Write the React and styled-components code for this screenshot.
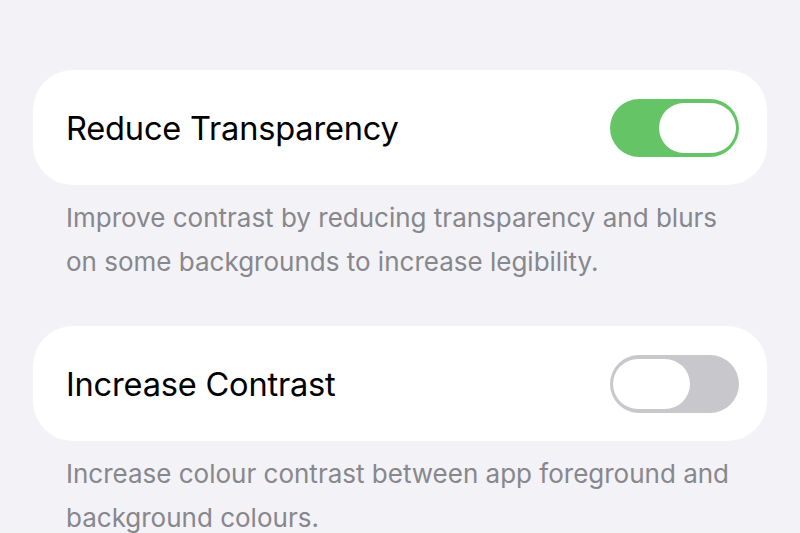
import React from "react";
import styled, { createGlobalStyle } from "styled-components";

const Global = createGlobalStyle`
  html, body { margin: 0; padding: 0; background: #f2f2f7; }
  body { font-family: Inter, "Noto Sans", sans-serif; -webkit-font-smoothing: antialiased; }
`;

const Page = styled.div`
  width: 800px;
  height: 533px;
  overflow: hidden;
  box-sizing: border-box;
  padding: 70px 33px 0 33px;
  display: flex;
  flex-direction: column;
`;

const Section = styled.section`
  display: flex;
  flex-direction: column;
  margin-bottom: 42px;
`;

const Card = styled.div`
  height: 115px;
  background: #ffffff;
  border-radius: 40px;
  display: flex;
  align-items: center;
  justify-content: space-between;
  padding: 0 28px 0 33px;
  box-sizing: border-box;
`;

const Title = styled.span`
  font-size: 32.6px;
  color: #000;
  letter-spacing: -0.2px;
`;

const Footer = styled.p`
  margin: 0;
  padding: 11px 33px 0 33px;
  font-size: 26px;
  line-height: 44px;
  color: #87878c;
  white-space: nowrap;
`;

const Track = styled.div`
  position: relative;
  width: 129px;
  height: 58px;
  border-radius: 29px;
  background: ${(p) => (p.$on ? "#65c466" : "#c7c7cc")};
  flex-shrink: 0;
`;

const Knob = styled.div`
  position: absolute;
  top: 4px;
  ${(p) => (p.$on ? "right: 3px;" : "left: 3px;")}
  width: 77px;
  height: 50px;
  border-radius: 25px;
  background: #ffffff;
`;

const Toggle = ({ on }) => (
  <Track $on={on}>
    <Knob $on={on} />
  </Track>
);

const items = [
  {
    title: "Reduce Transparency",
    on: true,
    footer: [
      "Improve contrast by reducing transparency and blurs",
      "on some backgrounds to increase legibility.",
    ],
  },
  {
    title: "Increase Contrast",
    on: false,
    footer: [
      "Increase colour contrast between app foreground and",
      "background colours.",
    ],
  },
];

export default function App() {
  return (
    <>
      <Global />
      <Page>
        {items.map((it) => (
          <Section key={it.title}>
            <Card>
              <Title>{it.title}</Title>
              <Toggle on={it.on} />
            </Card>
            <Footer>
              {it.footer[0]}
              <br />
              {it.footer[1]}
            </Footer>
          </Section>
        ))}
      </Page>
    </>
  );
}
